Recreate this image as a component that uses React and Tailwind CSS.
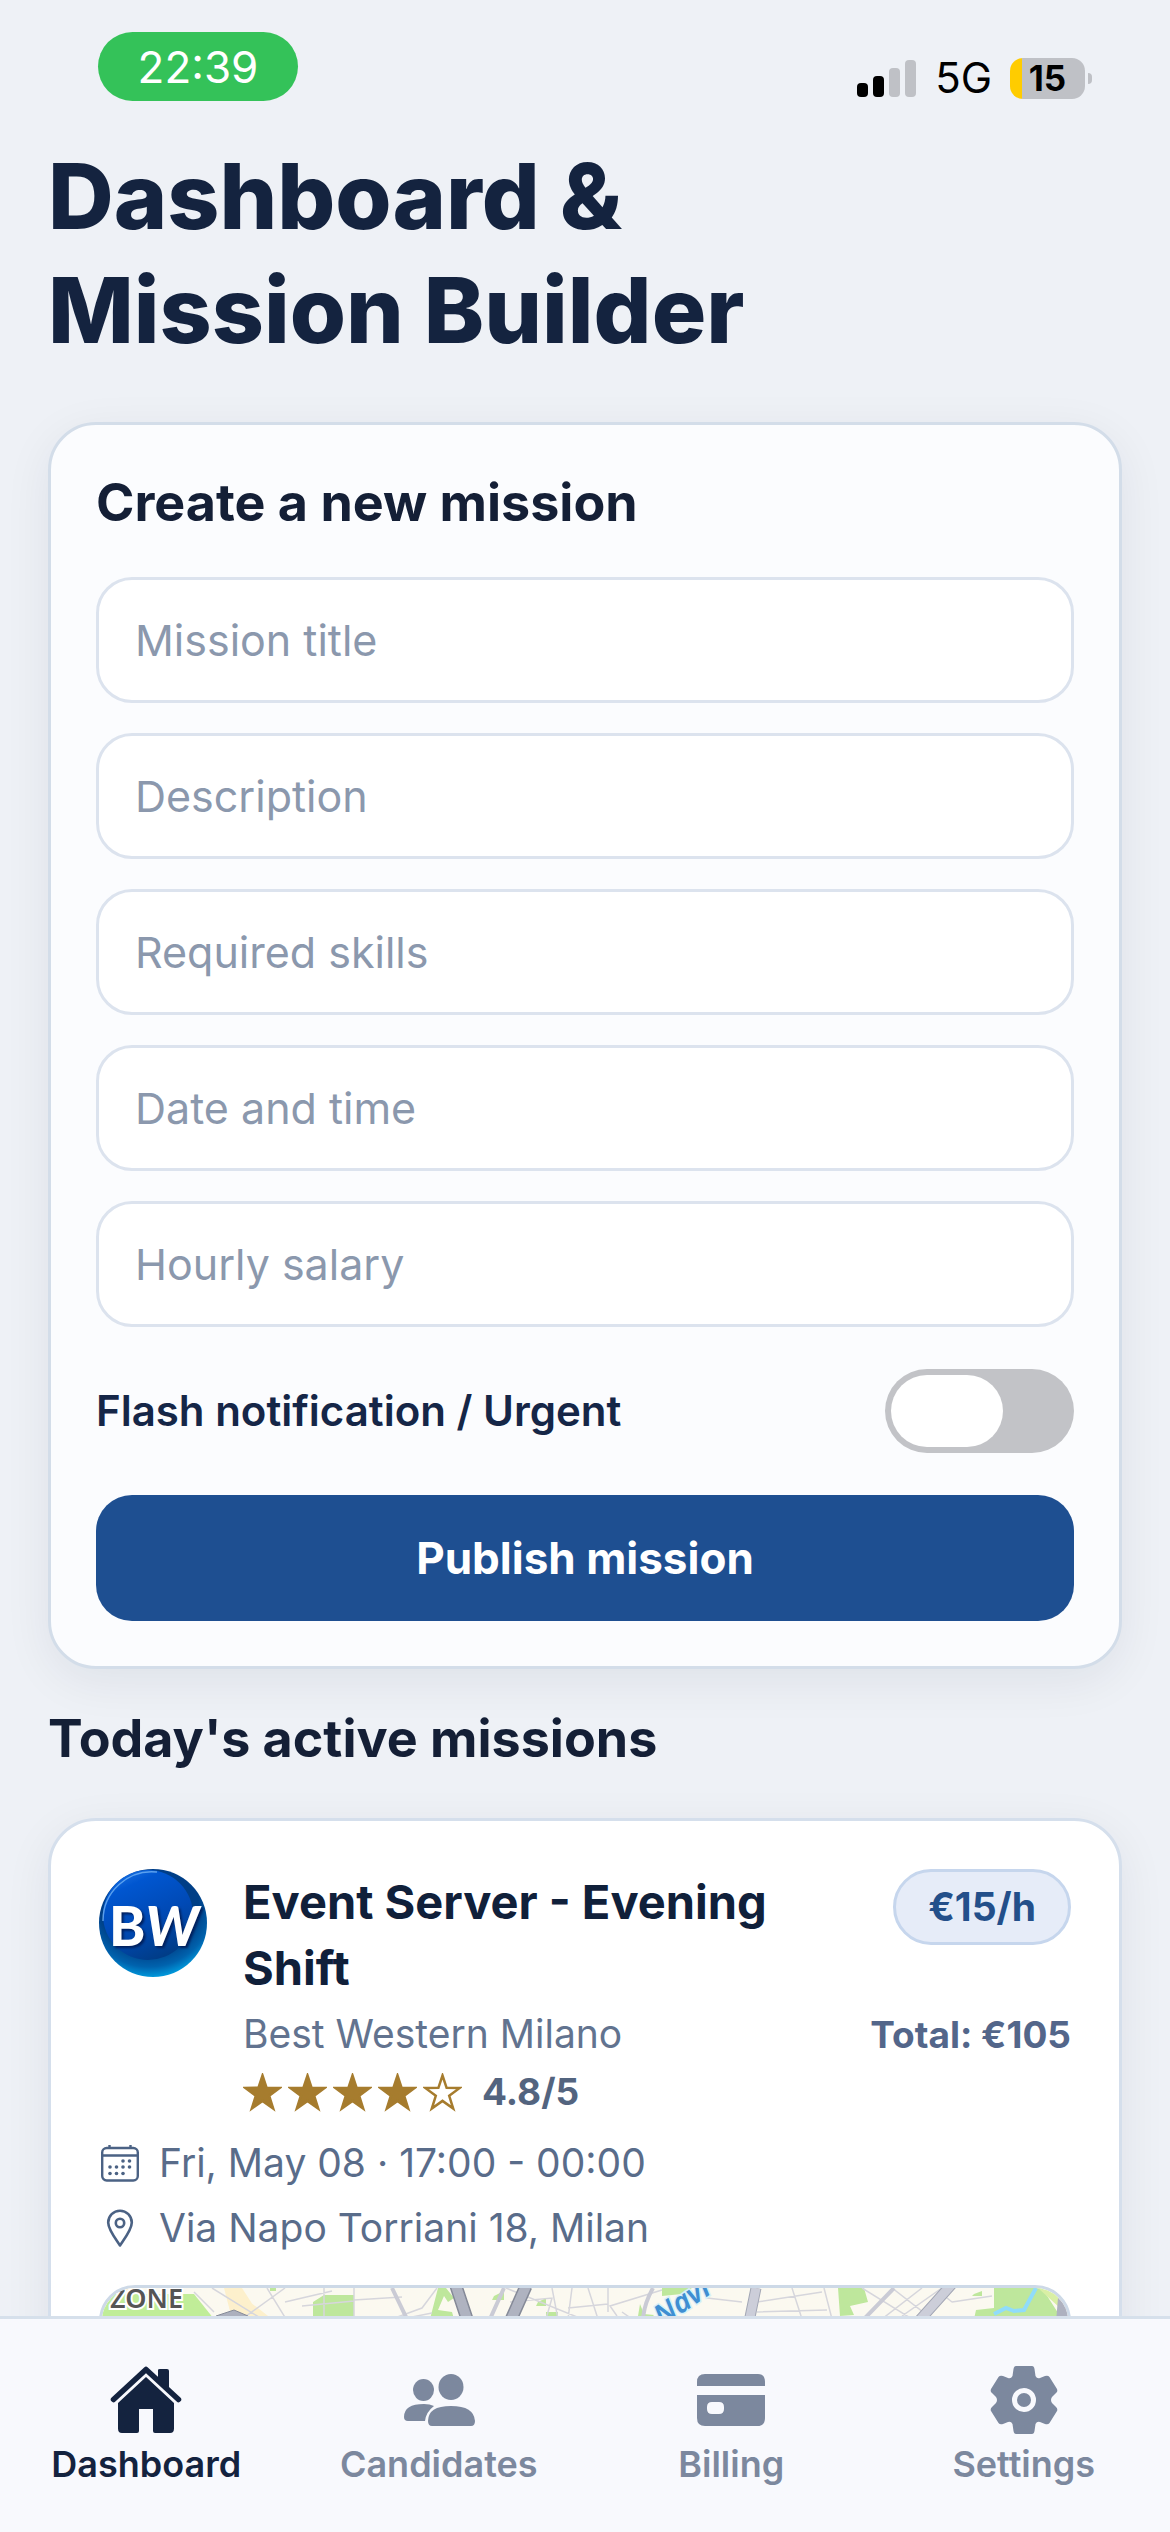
import React from "react";

const fields = ["Mission title", "Description", "Required skills", "Date and time", "Hourly salary"];

function StatusBar() {
  return (
    <div className="flex items-start justify-between pt-8 pr-[78px] pl-[98px]">
      <div className="flex h-[69px] w-[200px] items-center justify-center rounded-full bg-[#34c259] text-[44px] leading-none text-white">
        22:39
      </div>
      <div className="flex items-center gap-[18px] pt-[25px] text-black">
        <svg className="h-[38px] w-[60px]" viewBox="0 0 60 38" aria-hidden="true">
          <rect x="0" y="24" width="11" height="14" rx="4" />
          <rect x="16" y="17" width="11" height="21" rx="4" />
          <rect x="32" y="9" width="11" height="29" rx="4" fill="#bfc1c6" />
          <rect x="48" y="1" width="11" height="37" rx="4" fill="#bfc1c6" />
        </svg>
        <span className="text-[42px] leading-[42px]">5G</span>
        <div className="flex items-center gap-[3px]">
          <div className="flex h-[41px] w-[75px] items-center justify-center rounded-[13px] bg-linear-to-r from-[#ffcc00] from-16% to-[#bfc1c6] to-16% text-[35px] leading-none font-bold">
            15
          </div>
          <div className="h-[11px] w-1 rounded-r-full bg-[#bfc1c6]" />
        </div>
      </div>
    </div>
  );
}

function BrandBadge() {
  return (
    <svg className="size-[108px] shrink-0" viewBox="0 0 108 108" role="img" aria-label="BW">
      <defs>
        <radialGradient id="orb" cx="0.46" cy="0.3" r="0.74">
          <stop offset="0" stopColor="#003c8c" />
          <stop offset="0.62" stopColor="#003f86" />
          <stop offset="0.82" stopColor="#0062ad" />
          <stop offset="1" stopColor="#00aeee" />
        </radialGradient>
        <linearGradient id="gloss" x1="0.15" y1="0" x2="0.6" y2="1">
          <stop offset="0" stopColor="#1d74e4" />
          <stop offset="0.2" stopColor="#0056d0" />
          <stop offset="0.6" stopColor="#0049b4" />
          <stop offset="1" stopColor="#003c86" />
        </linearGradient>
      </defs>
      <circle cx="54" cy="54" r="54" fill="url(#orb)" />
      <circle cx="49" cy="46" r="45" fill="url(#gloss)" />
      <path d="M4 52A49 49 0 0 1 58 3" fill="none" stroke="#6fb2f5" strokeWidth="1.5" opacity="0.8" />
      <text
        x="55"
        y="77"
        textAnchor="middle"
        fill="#fff"
        fontFamily="Lato, sans-serif"
        fontWeight="900"
        fontSize="55"
        className="drop-shadow-[2px_2px_1px_#001f5c]"
      >
        B<tspan fontStyle="italic">W</tspan>
      </text>
    </svg>
  );
}

function Star({ filled }) {
  return (
    <svg className="h-[39px] w-[39px]" viewBox="0 0 39 39" aria-hidden="true">
      <path
        d="M19.5 2.5 23.6 14.8 36.8 14.9 26.2 22.8 30.2 35.6 19.5 27.9 8.8 35.6 12.8 22.8 2.2 14.9 15.4 14.8Z"
        fill={filled ? "#a67c2e" : "none"}
        stroke="#a67c2e"
        strokeWidth="2.5"
        strokeLinejoin="miter"
      />
    </svg>
  );
}

function CalendarIcon() {
  const dots = [[22, 17], [28.5, 17], [9, 23], [15.5, 23], [22, 23], [28.5, 23], [9, 29.5], [15.5, 29.5], [22, 29.5]];
  return (
    <svg className="h-[39px] w-[42px] shrink-0" viewBox="-2 0 42 39" fill="none" stroke="#4b6284" strokeWidth="2.4" aria-hidden="true">
      <rect x="1.2" y="4" width="35.6" height="32.5" rx="4.5" />
      <path d="M1.2 11.5H36.8M8.5 1v4M29.5 1v4" />
      {dots.map(([x, y]) => (
        <circle key={x + "-" + y} cx={x} cy={y} r="1.8" fill="#4b6284" stroke="none" />
      ))}
    </svg>
  );
}

function PinIcon() {
  return (
    <svg className="h-[39px] w-[42px] shrink-0" viewBox="0 0 42 39" fill="none" stroke="#4b6284" strokeWidth="2.6" strokeLinejoin="round" aria-hidden="true">
      <path d="M21 36.5C16 29 9.2 20.5 9.2 13.5A11.8 11.8 0 0 1 32.8 13.5C32.8 20.5 26 29 21 36.5Z" />
      <circle cx="21" cy="14" r="4.2" />
    </svg>
  );
}

function MapPreview() {
  return (
    <div className="mt-[30px] h-[360px] overflow-hidden rounded-[36px] border-[3px] border-[#cdd9e7]">
      <svg className="h-[354px] w-full" viewBox="0 0 966 354" preserveAspectRatio="xMinYMin slice" role="img" aria-label="Map of Milan">
        <rect width="966" height="354" fill="#fbf9f0" />
        <path d="M0 6H92L112 31V80H0Z" fill="#c0ed98" />
        <path d="M122 0H140L160 31H130ZM148 14 170 31H150ZM20 0H32V6H20Z" fill="#fdf0cc" />
        <path d="M222 7H252V31H211V14ZM168 0H174V3H168ZM336 0H344L352 10 346 14 342 8 336 22 350 24 352 31H328ZM392 8 402 3V12H390ZM436 14 444 10V18H434ZM444 24H456V31H444ZM560 0H590L580 6 560 8ZM538 16 542 26 552 27 548 31 536 28ZM736 0H762L766 14 748 18 752 27 738 28ZM872 6 880 3V8H870ZM892 0H940L960 31H872L874 22 892 20Z" fill="#bee79c" />
        <path d="M936 0H955L958 20Z" fill="#d9efa5" />
        <g fill="none" stroke="#d6d6dc" strokeWidth="1.5">
          <path d="M92 4 112 24M110 0 160 31M140 31 183 0M165 0 184 31M183 14 230 3M222 0V31M252 0V31M200 18 252 13M252 12 300 9M290 31 320 20 335 0M300 31 330 25M404 0 480 31M408 14 450 10 444 31M450 0 456 31M470 0 466 31M466 20 506 16M486 0 496 31M506 0V24M515 28 508 18 560 2M530 31 520 24M605 10 640 14M655 14 720 4M655 24 725 22M690 0 700 31M722 0 730 31M760 0 810 31M780 31 820 0M790 0 830 31M800 28 840 0M850 14 890 8M850 14 840 6" />
        </g>
        <g fill="none" stroke="#cacbd5" strokeWidth="4">
          <path d="M290 0 305 31M402 0 388 31M551 0Q542 16 541 31M792 0 762 31" />
        </g>
        <path d="M112 34 114 28 132 22 146 28 150 34V80H112Z" fill="#acb0bd" stroke="#858a98" />
        <path d="M354 -2 366 34M424 -2 408 34" stroke="#858a98" strokeWidth="13" />
        <path d="M354 -2 366 34M424 -2 408 34" stroke="#afb3c0" strokeWidth="10" />
        <path d="M654 0 647 34M850 -4 816 34" stroke="#a2a6b4" strokeWidth="11" />
        <path d="M654 0 647 34M850 -4 816 34" stroke="#ccced9" strokeWidth="9" />
        <path d="M934 0 922 22 912 23 904 20 892 26" fill="none" stroke="#90dcfa" strokeWidth="4" />
        <path d="M956 10 968 20V34H954Z" fill="#aeb1bf" />
        <text x="8" y="20" fontFamily="Noto Sans, sans-serif" fontWeight="600" fontSize="27" fill="#555" stroke="#fff" strokeWidth="4" paintOrder="stroke">ZONE</text>
        <text x="560" y="39" transform="rotate(-34 560 39)" fontFamily="Noto Sans, sans-serif" fontStyle="italic" fontWeight="600" fontSize="29" fill="#3f8fd2" stroke="#d8f1f8" strokeWidth="3" paintOrder="stroke">Navi</text>
      </svg>
    </div>
  );
}

const HomeIcon = () => (
  <svg className="size-[72px]" viewBox="0 0 72 72" fill="currentColor" aria-hidden="true">
    <path d="M3.5 35.5 36 5.5 68.5 35.5" fill="none" stroke="currentColor" strokeWidth="5.5" strokeLinecap="round" strokeLinejoin="round" />
    <path d="M48 6Q48 5 50 5H57Q59 5 59 7V27L48 17Z" />
    <path d="M36 13 64 39V64.5Q64 69 60 69H45Q43 69 43 67V45H29V67Q29 69 27 69H12Q8 69 8 64.5V39Z" />
  </svg>
);

const PeopleIcon = () => (
  <svg className="size-[72px]" viewBox="0 0 72 72" fill="currentColor" aria-hidden="true">
    <ellipse cx="48" cy="23" rx="12.5" ry="13" />
    <ellipse cx="20.5" cy="26" rx="10.5" ry="11" />
    <path d="M25 57Q25 42 48 42T72 57Q72 62 68 62H29Q25 62 25 57Z" />
    <path d="M1 53Q1 40 21 40Q27 40 31 42Q23 48 22 57H5Q1 57 1 53Z" />
  </svg>
);

const CardIcon = () => (
  <svg className="size-[72px]" viewBox="0 0 72 72" fill="currentColor" aria-hidden="true">
    <path d="M2 22V18Q2 10 10 10H63Q70 10 70 18V22Z" />
    <path fillRule="evenodd" d="M2 31H70V54Q70 62 62 62H10Q2 62 2 54ZM17 38Q12 38 12 43V45Q12 50 17 50H24Q29 50 29 45V43Q29 38 24 38Z" />
  </svg>
);

const GearIcon = () => (
  <svg className="size-[72px]" viewBox="0 0 72 72" fill="currentColor" aria-hidden="true">
    <path
      fillRule="evenodd"
      d="M28 2H44Q46 2 46.5 5L47.5 12Q49 15 52 14L57 12Q60 11 61.5 13L69 25Q70 28 68 29L64 33Q62 36 64 39L68 43Q70 45 69 47L61.5 59Q60 61 57 60L52 58Q49 57 47.5 60L46.5 67Q46 70 44 70H28Q26 70 25.5 67L24.5 60Q23 57 20 58L15 60Q12 61 10.5 59L3 47Q2 45 4 43L8 39Q10 36 8 33L4 29Q2 28 3 25L10.5 13Q12 11 15 12L20 14Q23 15 24.5 12L25.5 5Q26 2 28 2ZM36 24A12 12 0 1 0 36 48A12 12 0 1 0 36 24Z"
    />
    <circle cx="36" cy="36" r="7" />
  </svg>
);

const tabs = [
  { label: "Dashboard", Icon: HomeIcon, active: true },
  { label: "Candidates", Icon: PeopleIcon },
  { label: "Billing", Icon: CardIcon },
  { label: "Settings", Icon: GearIcon },
];

export default function App() {
  return (
    <div className="flex h-screen flex-col overflow-hidden bg-[#eef1f6] font-[Inter,sans-serif] text-[#14233f]">
      <div className="min-h-0 flex-1 overflow-hidden">
        <StatusBar />
        <main className="px-12">
          <h1 className="mt-[38px] text-[91px] leading-[114px] font-extrabold">
            Dashboard &amp;
            <br />
            Mission Builder
          </h1>

          <form
            onSubmit={(e) => e.preventDefault()}
            className="mt-[55px] rounded-[48px] border-[3px] border-[#d3dde9] bg-[#fbfcfe] p-[45px] shadow-[0_12px_48px_rgba(20,35,63,0.07)]"
          >
            <h2 className="text-[52px] leading-[66px] font-bold text-[#141f36]">Create a new mission</h2>
            <div className="mt-[41px] flex flex-col gap-[30px]">
              {fields.map((f) => (
                <input
                  key={f}
                  type="text"
                  aria-label={f}
                  placeholder={f}
                  className="h-[126px] w-full rounded-[36px] border-[3px] border-[#dce3ee] bg-white px-9 text-[43px] text-[#14233f] placeholder:text-[#8b98ad]"
                />
              ))}
            </div>
            <label className="mt-[42px] flex h-[84px] items-center justify-between text-[42px] leading-[54px] font-semibold text-[#152647]">
              Flash notification / Urgent
              <input
                type="checkbox"
                role="switch"
                className="h-[84px] w-[189px] appearance-none rounded-full bg-[#c2c3c7] p-1.5 before:block before:h-[72px] before:w-[112px] before:rounded-full before:bg-white checked:bg-[#34c259] checked:before:ml-[65px]"
              />
            </label>
            <button type="submit" className="mt-[42px] h-[126px] w-full rounded-[36px] bg-[#1e4f91] text-[44px] font-bold text-white">
              Publish mission
            </button>
          </form>

          <h2 className="mt-[37px] text-[52px] leading-[66px] font-bold text-[#141f36]">Today's active missions</h2>

          <article className="mt-[46px] rounded-[48px] border-[3px] border-[#d5dfec] bg-white p-12 shadow-[0_12px_48px_rgba(20,35,63,0.07)]">
            <div className="flex items-start gap-9">
              <BrandBadge />
              <div className="min-w-0 flex-1">
                <h3 className="text-[47px] leading-[66px] font-bold text-[#10203a]">Event Server - Evening Shift</h3>
                <p className="mt-[6px] text-[39px] leading-[54px] text-[#62738f]">Best Western Milano</p>
                <div className="mt-[10px] flex items-center" aria-label="Rated 4.8 out of 5">
                  <span className="flex gap-[6px]">
                    {[1, 2, 3, 4, 5].map((n) => (
                      <Star key={n} filled={n < 5} />
                    ))}
                  </span>
                  <span className="ml-[20px] text-[37px] leading-[42px] font-bold text-[#53647f]">4.8/5</span>
                </div>
              </div>
              <div className="flex flex-col items-end">
                <div className="flex h-[76px] items-center rounded-full border-[3px] border-[#c6d6ed] bg-[#e6ecf8] px-8 text-[39px] font-bold text-[#234f8a]">
                  €15/h
                </div>
                <p className="mt-[66px] text-[37px] leading-[48px] font-bold text-[#53668a]">Total: €105</p>
              </div>
            </div>
            <div className="mt-[23px] flex flex-col gap-[11px] text-[39px] leading-[54px] text-[#596c8a]">
              <p className="flex items-center gap-[18px]">
                <CalendarIcon />
                Fri, May 08 · 17:00 - 00:00
              </p>
              <p className="flex items-center gap-[18px]">
                <PinIcon />
                Via Napo Torriani 18, Milan
              </p>
            </div>
            <MapPreview />
          </article>
        </main>
      </div>

      <nav className="grid h-[216px] shrink-0 grid-cols-4 border-t-[3px] border-[#d6e0eb] bg-[#f8f9fd]">
        {tabs.map(({ label, Icon, active }) => (
          <a
            key={label}
            href={"#" + label.toLowerCase()}
            aria-current={active ? "page" : undefined}
            className={
              "flex flex-col items-center gap-1 pt-[45px] text-[36px] leading-[48px] font-semibold " +
              (active ? "text-[#14233f]" : "text-[#7c889e]")
            }
          >
            <Icon />
            {label}
          </a>
        ))}
      </nav>
    </div>
  );
}
